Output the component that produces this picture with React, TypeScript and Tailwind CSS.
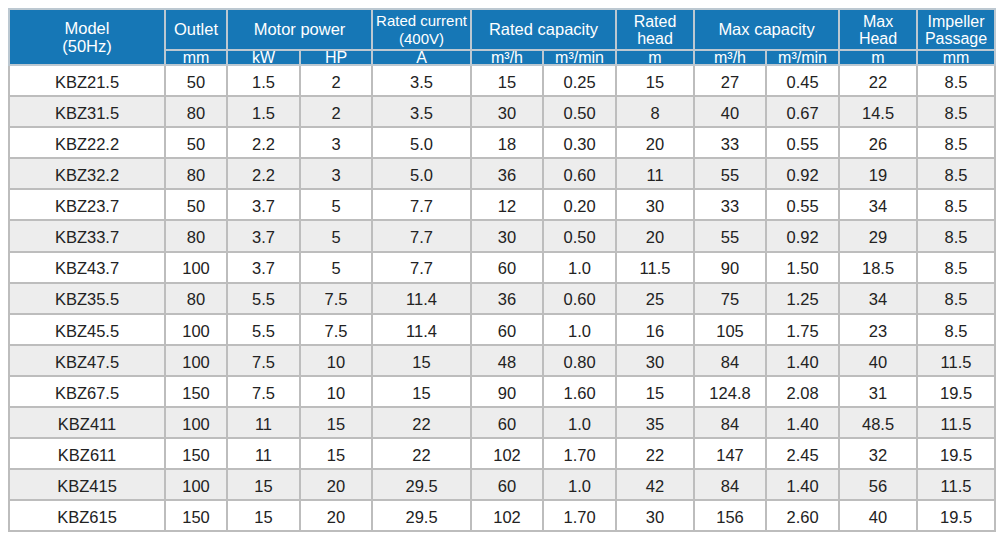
const widths = [156, 62, 73, 72, 99, 72, 73, 78, 72, 73, 78, 78];

const rows: string[][] = [
  ['KBZ21.5', '50', '1.5', '2', '3.5', '15', '0.25', '15', '27', '0.45', '22', '8.5'],
  ['KBZ31.5', '80', '1.5', '2', '3.5', '30', '0.50', '8', '40', '0.67', '14.5', '8.5'],
  ['KBZ22.2', '50', '2.2', '3', '5.0', '18', '0.30', '20', '33', '0.55', '26', '8.5'],
  ['KBZ32.2', '80', '2.2', '3', '5.0', '36', '0.60', '11', '55', '0.92', '19', '8.5'],
  ['KBZ23.7', '50', '3.7', '5', '7.7', '12', '0.20', '30', '33', '0.55', '34', '8.5'],
  ['KBZ33.7', '80', '3.7', '5', '7.7', '30', '0.50', '20', '55', '0.92', '29', '8.5'],
  ['KBZ43.7', '100', '3.7', '5', '7.7', '60', '1.0', '11.5', '90', '1.50', '18.5', '8.5'],
  ['KBZ35.5', '80', '5.5', '7.5', '11.4', '36', '0.60', '25', '75', '1.25', '34', '8.5'],
  ['KBZ45.5', '100', '5.5', '7.5', '11.4', '60', '1.0', '16', '105', '1.75', '23', '8.5'],
  ['KBZ47.5', '100', '7.5', '10', '15', '48', '0.80', '30', '84', '1.40', '40', '11.5'],
  ['KBZ67.5', '150', '7.5', '10', '15', '90', '1.60', '15', '124.8', '2.08', '31', '19.5'],
  ['KBZ411', '100', '11', '15', '22', '60', '1.0', '35', '84', '1.40', '48.5', '11.5'],
  ['KBZ611', '150', '11', '15', '22', '102', '1.70', '22', '147', '2.45', '32', '19.5'],
  ['KBZ415', '100', '15', '20', '29.5', '60', '1.0', '42', '84', '1.40', '56', '11.5'],
  ['KBZ615', '150', '15', '20', '29.5', '102', '1.70', '30', '156', '2.60', '40', '19.5'],
];

const th = 'border-2 border-[#bcc8d1] bg-[#1677b6] text-white font-normal text-center p-0';
const units = ['mm', 'kW', 'HP', 'A', 'm³/h', 'm³/min', 'm', 'm³/h', 'm³/min', 'm', 'mm'];

export default function App() {
  return (
    <div className="w-[1001px] h-[540px] bg-white pt-2 pl-2 font-['Liberation_Sans',Arial,sans-serif]">
      <table className="table-fixed border-collapse w-[986px] border-2 border-[#bdbdbd]">
        <colgroup>
          {widths.map((w, i) => (
            <col key={i} style={{ width: w }} />
          ))}
        </colgroup>
        <thead>
          <tr className="h-[41px]">
            <th rowSpan={2} className={`${th} text-[16.5px] leading-[18px]`}>
              Model
              <br />
              (50Hz)
            </th>
            <th className={`${th} text-[16.5px]`}>Outlet</th>
            <th colSpan={2} className={`${th} text-[16.5px]`}>Motor power</th>
            <th className={`${th} text-[15px] leading-[18px]`}>
              Rated current
              <br />
              (400V)
            </th>
            <th colSpan={2} className={`${th} text-[16.5px]`}>Rated capacity</th>
            <th className={`${th} text-[16px] leading-[17px]`}>
              Rated
              <br />
              head
            </th>
            <th colSpan={2} className={`${th} text-[16.5px]`}>Max capacity</th>
            <th className={`${th} text-[16px] leading-[17px]`}>
              Max
              <br />
              Head
            </th>
            <th className={`${th} text-[16px] leading-[17px]`}>
              Impeller
              <br />
              Passage
            </th>
          </tr>
          <tr className="h-[15px]">
            {units.map((u, i) => (
              <th key={i} className={`${th} text-[16px] leading-[13px]`}>
                {u}
              </th>
            ))}
          </tr>
        </thead>
        <tbody>
          {rows.map((r, i) => (
            <tr key={r[0]} className={`h-[31.1px] ${i % 2 === 1 ? 'bg-[#ededed]' : 'bg-white'}`}>
              {r.map((c, j) => (
                <td
                  key={j}
                  className="border-2 border-[#bdbdbd] text-center text-[16.5px] leading-none text-[#222] pt-[3px] pb-0 px-0"
                >
                  {c}
                </td>
              ))}
            </tr>
          ))}
        </tbody>
      </table>
    </div>
  );
}
